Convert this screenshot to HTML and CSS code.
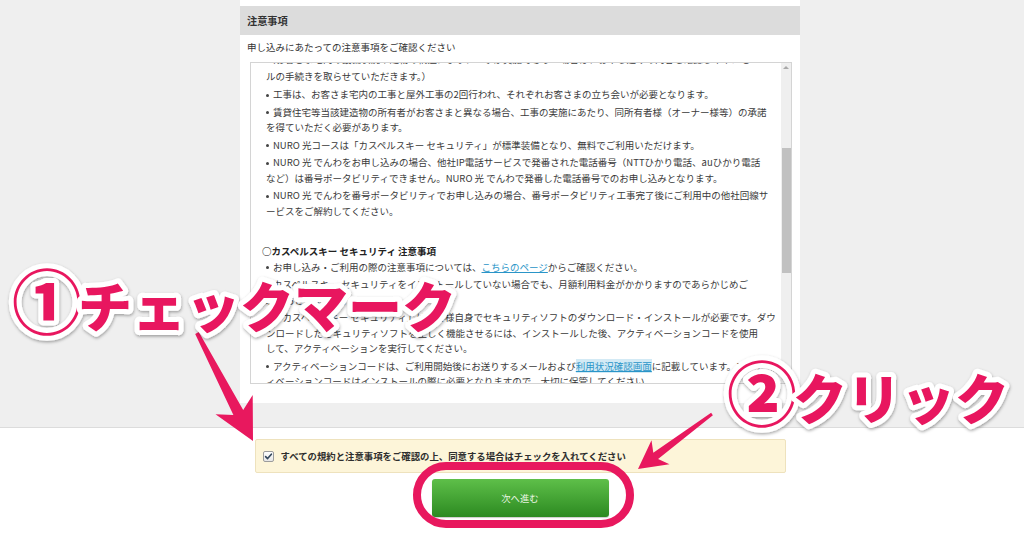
FILE: index.html
```html
<!DOCTYPE html>
<html lang="ja">
<head>
<meta charset="utf-8">
<title>注意事項</title>
<link rel="stylesheet" href="styles.css">
</head>
<body>
<section class="upper">
  <div class="panel">
    <h2 class="panel-head">注意事項</h2>
    <p class="lead">申し込みにあたっての注意事項をご確認ください</p>
    <div class="terms">
      <div class="terms-body">
        <ul class="notes first">
          <li class="cont"><span class="cut">（お客さま宅内の設備状況や建物の構造により、工事が実施できない場合は、お申し込みの内容を確認しキャンセ</span><br>ルの手続きを取らせていただきます。）</li>
          <li class="bul">工事は、お客さま宅内の工事と屋外工事の2回行われ、それぞれお客さまの立ち会いが必要となります。</li>
          <li class="bul">賃貸住宅等当該建造物の所有者がお客さまと異なる場合、工事の実施にあたり、同所有者様（オーナー様等）の承諾<br>を得ていただく必要があります。</li>
          <li class="bul">NURO 光コースは「カスペルスキー セキュリティ」が標準装備となり、無料でご利用いただけます。</li>
          <li class="bul">NURO 光 でんわをお申し込みの場合、他社IP電話サービスで発番された電話番号（NTTひかり電話、auひかり電話<br>など）は番号ポータビリティできません。NURO 光 でんわで発番した電話番号でのお申し込みとなります。</li>
          <li class="bul">NURO 光 でんわを番号ポータビリティでお申し込みの場合、番号ポータビリティ工事完了後にご利用中の他社回線サ<br>ービスをご解約してください。</li>
        </ul>
        <p class="sub-head">○カスペルスキー セキュリティ 注意事項</p>
        <ul class="notes">
          <li class="bul">お申し込み・ご利用の際の注意事項については、<a class="link" href="#">こちらのページ</a>からご確認ください。</li>
          <li class="bul">カスペルスキー セキュリティをインストールしていない場合でも、月額利用料金がかかりますのであらかじめご<br>承知おきください。</li>
          <li class="bul">「カスペルスキー セキュリティ」はお客様自身でセキュリティソフトのダウンロード・インストールが必要です。ダウ<br>ンロードしたセキュリティソフトを正しく機能させるには、インストールした後、アクティベーションコードを使用<br>して、アクティベーションを実行してください。</li>
          <li class="bul">アクティベーションコードは、ご利用開始後にお送りするメールおよび<a class="link hl" href="#">利用状況確認画面</a>に記載しています。アクテ<br>ィベーションコードはインストールの際に必要となりますので、大切に保管してください。</li>
        </ul>
      </div>
      <div class="scrollbar">
        <span class="sb-up"></span>
        <span class="sb-thumb"></span>
      </div>
    </div>
  </div>
</section>
<section class="agree">
  <label class="agree-box">
    <span class="check"><svg width="9" height="9" viewBox="0 0 9 9"><path d="M1.6 4.6 L3.6 6.6 L7.4 2.2" fill="none" stroke="#34475c" stroke-width="1.6" stroke-linecap="round" stroke-linejoin="round"/></svg></span>
    すべての規約と注意事項をご確認の上、同意する場合はチェックを入れてください
  </label>
  <button class="next" type="button">次へ進む</button>
</section>

<svg class="annot" width="1024" height="535" viewBox="0 0 1024 535">
  <defs>
    <filter id="sh" x="-10%" y="-30%" width="120%" height="160%">
      <feDropShadow dx="0.5" dy="1.5" stdDeviation="1.4" flood-color="#000" flood-opacity="0.35"/>
    </filter>
  </defs>
  <rect x="417" y="466" width="213" height="58" rx="29" ry="29" fill="none" stroke="#e8185e" stroke-width="8"/>
  <polygon fill="#e8185e" points="198.8,332.1 243.2,410.1 252.7,394.9 253,441 215.5,414.3 233.4,415.1 195.2,333.9"/>
  <polygon fill="#e8185e" points="712.9,415.2 658.1,459.1 669.5,464.3 638,469 651.5,440.3 653.3,452.7 711.1,412.8"/>
  <text class="annot-text" x="12" y="328" filter="url(#sh)"><tspan class="num" dy="1">①</tspan><tspan dx="-4" dy="-1">チェックマーク</tspan></text>
  <text class="annot-text" x="727" y="420" filter="url(#sh)"><tspan class="num" dy="1">②</tspan><tspan dx="-4" dy="-1">クリック</tspan></text>
</svg>
</body>
</html>
```
FILE: styles.css
```css
* {
  box-sizing: border-box;
  margin: 0;
  padding: 0;
}

body {
  width: 1024px;
  height: 535px;
  overflow: hidden;
  position: relative;
  background: #fff;
  color: #333;
  font-family: "Noto Sans CJK JP", "Noto Sans", sans-serif;
}

.upper {
  height: 428px;
  background: #efefef;
  border-bottom: 1px solid #dcdcdc;
  padding-left: 240px;
}

.panel {
  width: 560px;
  height: 403px;
  background: #fff;
  padding-top: 6px;
}

.panel-head {
  height: 29px;
  background: #dcdcdc;
  font-size: 10.2px;
  font-weight: 700;
  line-height: 29px;
  padding-left: 7px;
  color: #333;
}

.lead {
  font-size: 9.5px;
  line-height: 16px;
  margin-top: 4px;
  padding-left: 7px;
}

.terms {
  margin: 7px 0 0 10px;
  width: 542px;
  height: 322px;
  border: 1px solid #d4d4d4;
  display: flex;
}

.terms-body {
  flex: 1;
  overflow: hidden;
  padding-left: 11px;
  font-size: 9.5px;
  line-height: 15.5px;
  white-space: nowrap;
  color: #3a3a3a;
}

.notes {
  list-style: none;
  padding-left: 4px;
}

.notes.first {
  margin-top: -10px;
}

.cut {
  display: inline-block;
  transform: translateY(-1.5px);
}

.notes li + li {
  margin-top: 2px;
}

.notes li.cont + li {
  margin-top: 3px;
}

.notes li.bul::before {
  content: "";
  display: inline-block;
  width: 3px;
  height: 3px;
  border-radius: 50%;
  background: #444;
  margin-right: 4px;
  vertical-align: middle;
}

.sub-head {
  font-weight: 700;
  margin-top: 25px;
  color: #222;
}

.link {
  color: #2a95c8;
  text-decoration: underline;
}

.link.hl {
  background: #d3eaf5;
}

.scrollbar {
  width: 10px;
  background: #efefef;
  display: flex;
  flex-direction: column;
  align-items: center;
}

.sb-up {
  width: 0;
  height: 0;
  border-left: 3px solid transparent;
  border-right: 3px solid transparent;
  border-bottom: 3px solid #a9a9a9;
  margin-top: 3px;
}

.sb-thumb {
  width: 9px;
  height: 125px;
  margin-top: 79px;
  background: #c1c1c1;
}

.agree {
  width: 560px;
  margin-left: 240px;
  padding-top: 11px;
  display: flex;
  flex-direction: column;
  align-items: center;
  gap: 6px;
}

.agree-box {
  width: 531px;
  height: 34px;
  background: #fdf5d9;
  border: 1px solid #eee2bd;
  border-radius: 2px;
  display: flex;
  align-items: center;
  gap: 7px;
  padding-left: 7px;
  font-size: 9.4px;
  font-weight: 700;
  color: #2e2e2e;
}

.check {
  width: 11px;
  height: 11px;
  border: 1px solid #9c9c9c;
  border-radius: 2px;
  background: linear-gradient(#ffffff, #e6e6e6);
  display: flex;
  align-items: center;
  justify-content: center;
}

.next {
  width: 177px;
  height: 38px;
  border: none;
  border-radius: 3px;
  background: linear-gradient(#5ebf49, #2c8a21);
  box-shadow: 0 1px 1px rgba(0, 0, 0, 0.2);
  color: #e9f6e3;
  font-family: inherit;
  font-size: 9.4px;
}

.annot {
  position: absolute;
  left: 0;
  top: 0;
  pointer-events: none;
}

.annot-text {
  font-family: "Noto Sans CJK JP", sans-serif;
  font-size: 54px;
  font-weight: 900;
  fill: #e8185e;
  stroke: #fff;
  stroke-width: 10px;
  stroke-linejoin: round;
  paint-order: stroke fill;
}

.annot-text .num {
  font-size: 70px;
}
```
